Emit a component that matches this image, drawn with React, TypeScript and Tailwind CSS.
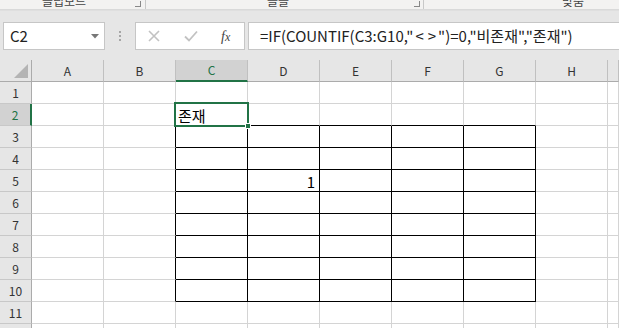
import React from "react";

const COLS = ["A", "B", "C", "D", "E", "F", "G", "H", ""];
const ROWS = [1, 2, 3, 4, 5, 6, 7, 8, 9, 10, 11, 12];

function Cell({ r, c }: { r: number; c: number }) {
  const rightBlack = r >= 3 && r <= 10 && c >= 1 && c <= 6;
  const bottomBlack = r >= 2 && r <= 10 && c >= 2 && c <= 6;
  const selected = r === 2 && c === 2;
  let content: React.ReactNode = null;
  if (selected) content = <span className="pl-[2px] text-[15px] leading-[18px] text-black">존재</span>;
  if (r === 5 && c === 3) content = <span className="ml-auto pr-[4px] text-[15px] leading-[18px] text-black">1</span>;
  return (
    <div
      className={
        "relative flex h-[22px] items-end border-b border-r " +
        (rightBlack ? "border-r-black " : "border-r-[#d4d4d4] ") +
        (bottomBlack ? "border-b-black" : "border-b-[#d4d4d4]")
      }
    >
      {content}
      {selected && (
        <>
          <div className="pointer-events-none absolute left-[-2px] top-[-2px] z-10 h-[25px] w-[75px] border-2 border-[#217346]" />
          <div className="absolute left-[69px] top-[19px] z-20 h-[6px] w-[6px] border border-white bg-[#217346]" />
        </>
      )}
    </div>
  );
}

export default function App() {
  return (
    <div
      className="h-[328px] w-[619px] overflow-hidden bg-white"
      style={{ fontFamily: '"Noto Sans CJK KR", "Noto Sans", sans-serif' }}
    >
      {/* ribbon strip */}
      <div className="relative h-[9px] overflow-hidden bg-[#f3f2f1] text-[12px] text-[#444]">
        <div className="flex h-[20px] -translate-y-[9px] items-center whitespace-nowrap">
          <span className="ml-[38px] w-[52px] text-center">클립보드</span>
          <span className="ml-[45px] flex h-[20px] items-center pt-[6px]">
            <span className="block h-[6px] w-[6px] border-b border-r border-[#888]" />
          </span>
          <span className="ml-[4px] block h-[20px] w-px bg-[#c8c8c8]" />
          <span className="ml-[119px] w-[26px] text-center">글꼴</span>
          <span className="ml-[123px] flex h-[20px] items-center pt-[6px]">
            <span className="block h-[6px] w-[6px] border-b border-r border-[#888]" />
          </span>
          <span className="ml-[3px] block h-[20px] w-px bg-[#c8c8c8]" />
          <span className="ml-[135px] w-[28px] text-center">맞춤</span>
        </div>
      </div>
      <div className="h-[2px] bg-gradient-to-b from-[#d6d6d6] to-[#e2e2e2]" />

      {/* formula bar */}
      <div className="flex items-stretch bg-[#e6e6e6] pb-[10px] pt-[11px]">
        <div className="ml-[3px] flex h-[28px] w-[102px] items-center border border-[#c6c6c6] bg-white pl-[6px] pr-[5px]">
          <span className="text-[15px] text-[#222]">C2</span>
          <svg className="ml-auto" width="8" height="5" viewBox="0 0 8 5">
            <path d="M0 0 H8 L4 4.5 Z" fill="#777" />
          </svg>
        </div>
        <div className="flex w-[30px] flex-col items-center justify-center gap-[2px]">
          <span className="block h-[2px] w-[2px] bg-[#a6a6a6]" />
          <span className="block h-[2px] w-[2px] bg-[#a6a6a6]" />
          <span className="block h-[2px] w-[2px] bg-[#a6a6a6]" />
        </div>
        <div className="flex h-[28px] w-[110px] items-center border border-[#c6c6c6] bg-white">
          <svg className="ml-[12px]" width="12" height="12" viewBox="0 0 12 12">
            <path d="M1 1 L11 11 M11 1 L1 11" stroke="#c2c2c2" strokeWidth="1.6" fill="none" />
          </svg>
          <svg className="ml-[24px]" width="14" height="12" viewBox="0 0 14 12">
            <path d="M1 6.5 L5 10.5 L13 1.5" stroke="#c2c2c2" strokeWidth="1.8" fill="none" />
          </svg>
          <span
            className="ml-[23px] text-[14px] italic text-[#444]"
            style={{ fontFamily: '"Liberation Serif", serif' }}
          >
            f<span className="text-[12px]">x</span>
          </span>
        </div>
        <div className="ml-[3px] flex h-[28px] flex-1 items-center border border-r-0 border-[#c6c6c6] bg-white pl-[11px]">
          <span className="whitespace-nowrap text-[15px] text-[#222]">
            =IF(COUNTIF(C3:G10,"<span className="mx-[2px]">&lt;</span>
            <span className="mx-[2px]">&gt;</span>")=0,"비존재","존재")
          </span>
        </div>
      </div>

      {/* grid */}
      <div className="grid grid-cols-[32px_repeat(8,72px)_1fr] bg-white">
        {/* header row */}
        <div className="relative h-[22px] border-b border-r border-b-[#ababab] border-r-[#ababab] bg-[#e6e6e6]">
          <svg className="absolute bottom-[3px] right-[3px]" width="14" height="14" viewBox="0 0 14 14">
            <path d="M14 0 V14 H0 Z" fill="#b4b4b4" />
          </svg>
        </div>
        {COLS.map((c, i) => (
          <div
            key={"h" + i}
            className={
              "flex h-[22px] items-center justify-center border-r border-r-[#c0c0c0] text-[12px] " +
              (i === 2
                ? "border-b-2 border-b-[#217346] bg-[#d2d2d2] text-[#217346]"
                : "border-b border-b-[#ababab] bg-[#e6e6e6] text-[#333]")
            }
          >
            {c}
          </div>
        ))}
        {ROWS.map((r) => (
          <React.Fragment key={r}>
            <div
              className={
                "flex h-[22px] items-center justify-center border-b border-b-[#c8c8c8] text-[12px] " +
                (r === 2
                  ? "border-r-2 border-r-[#217346] bg-[#d2d2d2] text-[#217346]"
                  : "border-r border-r-[#ababab] bg-[#e6e6e6] text-[#333]")
              }
            >
              {r}
            </div>
            {COLS.map((_, c) => (
              <Cell key={c} r={r} c={c} />
            ))}
          </React.Fragment>
        ))}
      </div>
    </div>
  );
}
